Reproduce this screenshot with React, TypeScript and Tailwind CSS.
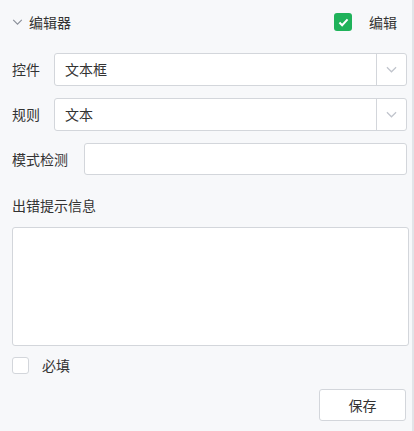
import React from 'react';

const font = { fontFamily: '"Noto Sans CJK SC", "Noto Sans", sans-serif' };

function Chevron({ className }: { className?: string }) {
  return (
    <svg viewBox="0 0 12 7" className={className} fill="none" stroke="currentColor" strokeWidth="1.3">
      <path d="M1 1l5 5 5-5" />
    </svg>
  );
}

function Select({ value }: { value: string }) {
  return (
    <div className="flex-1 h-[33px] flex bg-white border border-[#d3d6db] rounded-[3px]">
      <div className="flex-1 flex items-center pl-[10px] text-[14px] text-[#333]">{value}</div>
      <div className="w-[30px] border-l border-[#d3d6db] flex items-center justify-center">
        <Chevron className="w-[11px] h-[7px] text-[#c0c4cc]" />
      </div>
    </div>
  );
}

export default function App() {
  const [editing, setEditing] = React.useState(true);
  const [required, setRequired] = React.useState(false);

  return (
    <div style={font} className="w-[414px] h-[431px] bg-[#f7f8fa] border-r-2 border-[#e2e4e8] pl-[12px] pr-[3px] text-[#333] text-[14px]">
      {/* Header */}
      <div className="h-[44px] flex items-center">
        <Chevron className="w-[11px] h-[6px] text-[#8a8f99] mr-[6px]" />
        <span className="text-[14px]">编辑器</span>
        <button
          onClick={() => setEditing(!editing)}
          className="ml-auto w-[18px] h-[18px] rounded-[3px] bg-[#1fb25a] flex items-center justify-center"
        >
          {editing && (
            <svg viewBox="0 0 12 10" className="w-[11px] h-[9px]" fill="none" stroke="white" strokeWidth="2.2">
              <path d="M1.5 5l3 3 6-6.5" />
            </svg>
          )}
        </button>
        <span className="ml-[17px] mr-[12px]">编辑</span>
      </div>

      {/* Fields */}
      <div className="mt-[9px] flex items-center mr-[2px]">
        <span className="w-[42px]">控件</span>
        <Select value="文本框" />
      </div>
      <div className="mt-[12px] flex items-center mr-[2px]">
        <span className="w-[42px]">规则</span>
        <Select value="文本" />
      </div>
      <div className="mt-[12px] flex items-center mr-[2px]">
        <span className="w-[72px]">模式检测</span>
        <input className="flex-1 h-[32px] bg-white border border-[#d3d6db] rounded-[3px] outline-none px-2" />
      </div>

      <div className="mt-[22px] leading-[16px]">出错提示信息</div>
      <textarea className="block mt-[14px] w-full h-[119px] bg-white border border-[#d3d6db] rounded-[3px] outline-none resize-none p-2" />

      <label className="mt-[9px] flex items-center cursor-pointer">
        <span
          onClick={() => setRequired(!required)}
          className="w-[17px] h-[17px] bg-white border border-[#d3d6db] rounded-[3px]"
        />
        <span className="ml-[13px]">必填</span>
      </label>

      <div className="mt-[13px] flex justify-end mr-[3px]">
        <button className="w-[87px] h-[32px] bg-white border border-[#d3d6db] rounded-[3px] text-[14px] text-[#333]">
          保存
        </button>
      </div>
    </div>
  );
}
